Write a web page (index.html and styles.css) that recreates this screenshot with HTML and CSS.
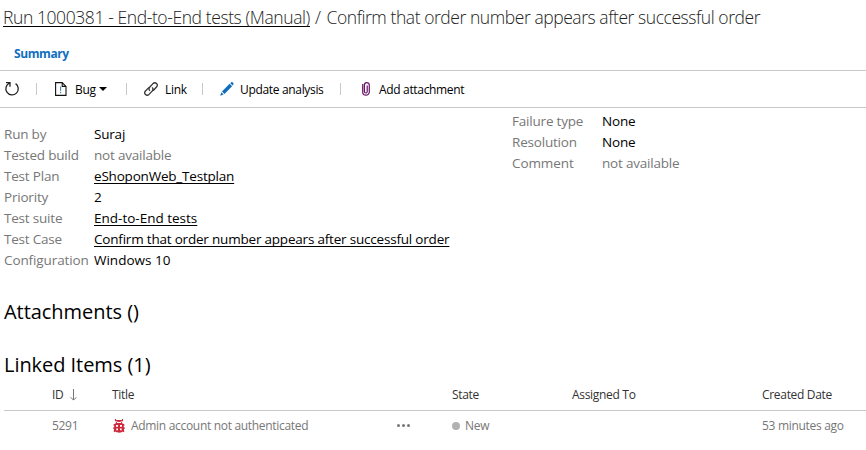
FILE: index.html
```html
<!DOCTYPE html>
<html lang="en">
<head>
<meta charset="utf-8">
<title>Test result</title>
<link rel="stylesheet" href="styles.css">
</head>
<body>
<header class="title"><a href="#" class="run-link">Run 1000381 - End-to-End tests (Manual)</a><span class="slash"> / </span><span class="case-name">Confirm that order number appears after successful order</span></header>
<nav class="tabs"><span class="tab">Summary</span></nav>
<div class="toolbar">
  <svg class="icon refresh" width="16" height="16" viewBox="0 0 16 16" fill="none" stroke="#222" stroke-width="1.3"><path d="M2 1.7h4v4M5.6 2A6.2 6.2 0 1 0 11.6 2.6"/></svg>
  <i class="sep"></i>
  <span class="tool bug"><svg class="icon" width="12" height="14" viewBox="0 0 12 14" fill="none" stroke="#111" stroke-width="1.1"><path d="M.6.6h6.6l3.8 3.8v9H.6zM7.2.6v3.8H11"/><path stroke="#3f87ad" d="M5.6 4.5v4.3M5.6 9.8v1.4"/></svg><span>Bug</span><i class="caret"></i></span>
  <i class="sep"></i>
  <span class="tool link"><svg class="icon" width="16" height="16" viewBox="0 0 16 16" fill="none" stroke="#333" stroke-width="1.3"><path d="M7 9.8C5.6 8.7 5.7 7.3 6.6 6.2L10 2.6c2.4-2.1 5.6.6 3.7 3.2L11 8.7c-.6.6-1.3.8-2 .6"/><path d="M9 6.4c1.4 1.1 1.3 2.4.4 3.5L6 13.4c-2.4 2.1-5.6-.6-3.7-3.2L5 7.4c.6-.6 1.3-.8 2-.6"/></svg><span>Link</span></span>
  <i class="sep"></i>
  <span class="tool update"><svg class="icon" width="14" height="14" viewBox="0 0 14 14" fill="#106ebe"><path d="M2 9.4l7.6-7.6 2.5 2.5-7.6 7.6zM10.3 1.2L11.5.1c.8-.3 2.4 1.2 2 2.1l-1 1.3zM1.4 10.3l2.2 2.2L.2 13.8z"/></svg><span>Update analysis</span></span>
  <i class="sep"></i>
  <span class="tool attach"><svg class="icon" width="8" height="14" viewBox="0 0 8 14" fill="none" stroke="#6a1268" stroke-width="1.2"><path d="M.7 2v8c0 4.2 6.6 4.2 6.6 0V3.2C7.3-.2 2.4-.2 2.4 3.2v6.3c0 2 2.8 2 2.8 0V3.4"/></svg><span>Add attachment</span></span>
</div>
<main>
  <section class="details">
    <dl class="run">
      <dt>Run by</dt><dd>Suraj</dd>
      <dt>Tested build</dt><dd class="muted">not available</dd>
      <dt>Test Plan</dt><dd><a href="#">eShoponWeb_Testplan</a></dd>
      <dt>Priority</dt><dd>2</dd>
      <dt>Test suite</dt><dd class="wide"><a href="#">End-to-End tests</a></dd>
      <dt>Test Case</dt><dd><a href="#">Confirm that order number appears after successful order</a></dd>
      <dt class="config">Configuration</dt><dd class="wide">Windows 10</dd>
    </dl>
    <dl class="analysis">
      <dt>Failure type</dt><dd>None</dd>
      <dt>Resolution</dt><dd>None</dd>
      <dt class="config">Comment</dt><dd class="muted">not available</dd>
    </dl>
  </section>
  <h2 class="attachments">Attachments ()</h2>
  <h2 class="linked">Linked Items (1)</h2>
  <div class="grid head">
    <span class="id">ID<svg width="7" height="12" viewBox="0 0 7 12" fill="none" stroke="#777"><path d="M3.5 0v11M.6 8.2l2.9 2.9 2.9-2.9"/></svg></span>
    <span>Title</span><span></span><span>State</span><span>Assigned To</span><span>Created Date</span>
  </div>
  <div class="grid row">
    <span>5291</span>
    <span class="item"><svg width="12" height="14" viewBox="0 0 12 14"><path fill="none" stroke="#cc293d" stroke-width="1.1" d="M2.5 0v1.6h7V0"/><path fill="#cc293d" d="M2.6 4.6C2.6 1 9.4 1 9.4 4.6l2 .6v1.2l-.7.4.2 1.7h1v1.2h-1l.4 2.8-1 .7-.8-.6C8 14.2 4 14.2 2.5 12.6l-.8.6-1-.7.4-2.8h-1V8.500h1l.2-1.700-.7-.4V5.200z"/><path fill="#fff" d="M4 2.900h4v1.100H4zM3 6.100h2v1.700H3zM7 6.100h2v1.700H7zM3.300 9.600h1.700v1.600H3.300zM7 9.600h1.700v1.600H7z"/></svg><span>Admin account not authenticated</span></span>
    <span class="more"><i></i><i></i><i></i></span>
    <span class="state"><i></i>New</span><span></span><span>53 minutes ago</span>
  </div>
</main>
</body>
</html>
```
FILE: styles.css
```css
* { box-sizing: border-box; }
body { margin: 0; height: 450px; overflow: hidden; background: #fff; color: #000; font-family: "Open Sans", "Noto Sans", sans-serif; font-size: 13.5px; letter-spacing: -0.2px; }
a { color: inherit; text-underline-offset: 2px; text-decoration-thickness: 1px; text-decoration-skip-ink: none; }
.title { height: 36px; padding-left: 3px; font-size: 17.5px; font-weight: 300; line-height: 35px; letter-spacing: -0.41px; white-space: pre; color: #222; }
.title a { text-decoration-color: #000; }
.slash { letter-spacing: 0.5px; }
.case-name { letter-spacing: -0.44px; }
.tabs { height: 35px; padding-left: 14px; border-bottom: 1px solid #c8c8c8; line-height: 36px; font-size: 12px; font-weight: 700; letter-spacing: -0.4px; color: #106ebe; }
.toolbar { display: flex; align-items: center; height: 37px; padding-left: 4px; border-bottom: 1px solid #c8c8c8; font-size: 12px; letter-spacing: -0.33px; }
.icon { display: block; flex: none; }
.sep { width: 1px; height: 12px; margin-left: 16px; background: #c8c8c8; }
.tool { display: flex; align-items: center; white-space: nowrap; }
.tool.bug { width: 88px; margin-right: -15px; padding-left: 18px; }
.bug .icon { margin-right: 8px; }
.caret { margin-left: 3px; border: 4px solid transparent; border-top-color: #000; border-bottom: 0; }
.tool.link { width: 76px; margin-right: -17px; padding-left: 16px; }
.link .icon { margin-right: 6px; }
.tool.update { width: 138px; margin-right: -17px; padding-left: 17px; }
.update .icon { margin-right: 6px; }
.tool.attach { padding-left: 21px; }
.attach .icon { margin-right: 9px; }
main { padding-left: 4px; }
.details { display: grid; grid-template-columns: 508px 1fr; height: 189px; }
dl { display: grid; grid-template-columns: 90px 1fr; grid-auto-rows: 21px; align-content: start; margin: 0; line-height: 21px; white-space: nowrap; }
.run { padding-top: 16px; }
.analysis { padding-top: 3px; }
dt, .muted { color: #777; }
dd { margin: 0; }
.wide { letter-spacing: 0; }
.config { letter-spacing: -0.1px; }
h2 { margin: 0; font-size: 20px; font-weight: 400; line-height: 30px; letter-spacing: -0.05px; }
.linked { margin-top: 23px; }
.grid { display: grid; grid-template-columns: 60px 284px 56px 120px 190px 1fr; align-items: center; height: 31px; padding-left: 48px; font-size: 12px; letter-spacing: -0.31px; }
.head { height: 31px; border-bottom: 1px solid #c8c8c8; padding-bottom: 1px; color: #333; }
.row { height: 29px; color: #777; }
.id, .item, .state, .more { display: flex; align-items: center; }
.id svg { margin-left: 7px; }
.item svg { margin: 0 6px 0 1px; }
.more { gap: 2px; padding-left: 1px; }
.more i { width: 3px; height: 3px; border-radius: 50%; background: #777; }
.state i { width: 8px; height: 8px; margin-right: 5px; border-radius: 50%; background: #b2b2b2; }
```
